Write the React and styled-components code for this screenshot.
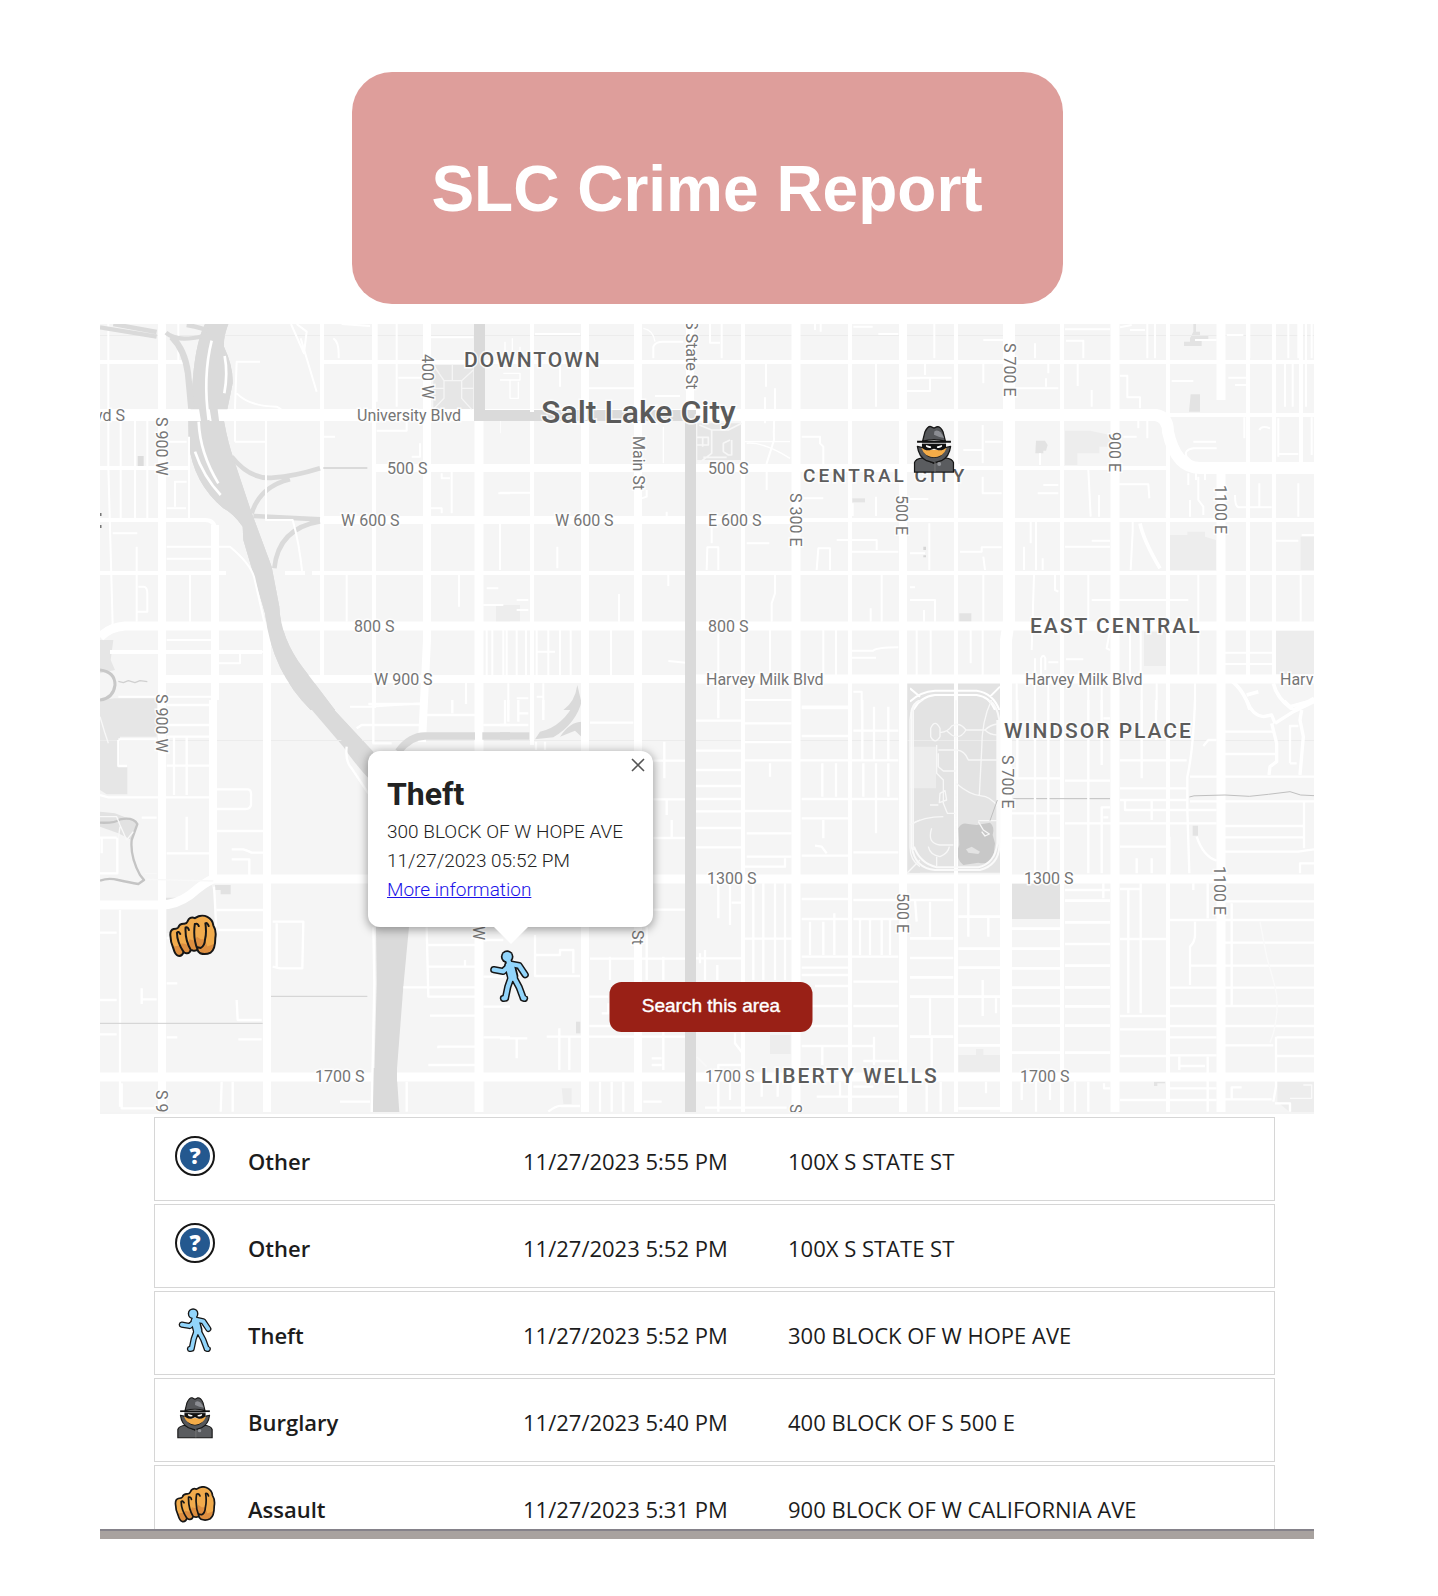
import React from "react";
import styled, { createGlobalStyle } from "styled-components";

const GlobalStyle = createGlobalStyle`
  *, *::before, *::after { box-sizing: border-box; }
  body { margin: 0; background: #fff; font-family: "Open Sans", sans-serif; color: #1c1c1c; }
`;

const Page = styled.main`
  padding: 72px 124px 56px 100px;
`;

const Banner = styled.header`
  display: flex;
  align-items: center;
  justify-content: center;
  max-width: 711px;
  height: 232px;
  margin: 0 auto 20px;
  padding-top: 2px;
  border-radius: 40px;
  background: #de9e9b;
`;

const Title = styled.h1`
  margin: 0;
  font: bold 64px/72px "Liberation Sans", Arial, sans-serif;
  color: #fff;
`;

/* ---------- map ---------- */

const MapFrame = styled.section`
  position: relative;
  height: 790px;
  overflow: hidden;
  background: #f5f5f5;
`;

const MapCanvas = styled.svg`
  display: block;
  width: 100%;
  height: 100%;
`;

const RoadLabel = styled.text`
  font: 400 16px Roboto, sans-serif;
  fill: #757575;
  stroke: #fff;
  stroke-width: 3px;
  stroke-opacity: 0.8;
  paint-order: stroke;
`;

const AreaLabel = styled(RoadLabel)`
  font-size: ${(p) => (p.$small ? 19 : 21)}px;
  font-weight: 500;
  fill: #5c5c5c;
  letter-spacing: ${(p) => (p.$small ? 3 : 2)}px;
`;

const CityLabel = styled(RoadLabel)`
  font-size: 32px;
  font-weight: 500;
  fill: #5a5a5a;
`;

const Pin = styled.span`
  position: absolute;
  left: calc(50% + ${(p) => p.$x}px);
  top: ${(p) => p.$y}px;
  line-height: 0;
  transform: translate(-50%, -50%);
`;

const Popup = styled.article`
  position: absolute;
  left: calc(50% - 339px);
  top: 427px;
  width: 285px;
  padding: 24px 20px 23px 19px;
  border-radius: 12px;
  background: #fff;
  box-shadow: 0 2px 10px 1px rgba(0, 0, 0, 0.35);
  font: 300 19px/29px Roboto, sans-serif;
  color: #222;

  &::after {
    content: "";
    position: absolute;
    top: 100%;
    left: 126px;
    border: 17px solid transparent;
    border-top-color: #fff;
    border-bottom: 0;
  }
`;

const PopupTitle = styled.h2`
  margin: 0 0 4px;
  font-size: 32px;
  line-height: 38px;
  font-weight: 700;
`;

const PopupLine = styled.p`
  margin: 0;
  white-space: nowrap;
`;

const PopupLink = styled.a`
  color: #1a12e8;
`;

const CloseButton = styled.button`
  position: absolute;
  top: 4px;
  right: 5px;
  display: grid;
  place-items: center;
  width: 20px;
  height: 20px;
  padding: 0;
  border: 0;
  background: none;
`;

const SearchButton = styled.button`
  position: absolute;
  left: calc(50% + 4px);
  top: 658px;
  width: 203px;
  height: 50px;
  padding: 0 0 3px;
  transform: translateX(-50%);
  border: 0;
  border-radius: 12px;
  background: #992016;
  color: #fff;
  font: 19px "Liberation Sans", Arial, sans-serif;
  -webkit-text-stroke: 0.4px #fff;
`;

const ROADS = [
  [4, "M322 324V676M374 324V708M743 324V1112M850 324V1112M1062 324V1112M1168 324V1112M956 324V1112M1248 324V675M1274 324V680M1301 324V462M532 324V745"],
  [4, "M100 362H187M322 362H687M695 362H1314M100 468H190M100 520H205Q215 520 215 530M100 573H226M285 573H305M312 573H374M110 652H262M960 468H1168M796 520H1314M374 573H687M695 573H1314M1168 415H1314"],
  [8, "M162 324V1112M215 525V700M213 700V880M267 630V1112M427 324V640L422 742M585 324V1112M638 324V1112M903 324V1112M690 324V415M165 679H687M374 468H687M322 520H687M695 520H796M695 468H960"],
  [9, "M479 415V1112M796 324V1112M1115 324V1112M1221 324V400M1221 470V1112M100 637Q110 627 125 626H687M695 626H1314M695 679H1314M100 905H161Q176 905 190 895Q205 882 213 879H687M695 879H1314M100 1077H377M395 1077H687M695 1077H1314"],
  [12, "M100 415H1156Q1168 417 1168 432Q1176 468 1200 468H1314M1009 324V620L1006 640V1112"],
];

const TILES = [
  {
    x: 90, y: 310, h: 400,
    shapes: [
      ["#e6e6e6", "M1030 165H1150V298H1030ZM30 990H70L62 1050L75 1080L30 1090ZM75 1165H200V1200H30V1170Z"],
      ["#dcdcdc", "M143 438h18v30h-18z"],
      ["#ededed", "M1218 885h42v52h-42z"],
      ["#dadada", "M300 298L310 190Q320 90 345 42H415Q400 80 402 110Q430 170 428 220Q420 260 412 298ZM295 333H402Q414 400 432 450L482 600L545 770L568 890Q572 985 640 1075L735 1200H662Q545 1085 525 910Q490 790 460 690L458 650Q430 610 400 595Q310 520 296 400Z"],
    ],
    lines: [
      ["#fff", 6, "M55 42V470L68 945M92 330V625M135 330V625M172 330V625M297 380V625M300 790V935M140 710V935M230 710H420Q480 760 492 800L525 945M230 746H365M145 830H160Q172 830 172 850V905H140M68 670H142M230 595H288M255 590V515H290M230 395H290M265 155V42M30 155H270M230 990H365M230 1025H520M385 1060H450V1030M85 1160H370"],
      ["#fff", 6, "M603 42L642 130L650 65L620 42M632 85L680 245M435 395V290L440 155H510M440 250Q480 290 560 290Q570 295 575 300M435 395H525M700 155H840M860 42V275M920 42V290M925 203H1000M755 42L840 48M1020 82H1150M730 85Q748 95 746 145M700 380H735M950 330V362H860M965 440H990V400M1085 470V610M1020 595H1055V610M1055 490V505H1080M770 790V935M1107 795V890M1225 550H1260M1180 885H1240M1190 835H1225M1230 640V780M1190 960V1100M1207 960V1108M1240 960V1108M1128 1110V1170M835 1190L1000 1180M780 1190H850"],
      ["#dadada", 13, "M30 52L200 80M70 42L200 66M290 45Q340 52 370 72M228 68Q260 98 340 78"],
      ["#dadada", 19, "M245 80Q285 120 294 190L304 296"],
      ["#dadada", 14, "M425 440Q480 510 550 503Q610 500 690 475M485 610Q510 530 600 508M490 618L690 628M553 775Q565 655 690 634"],
      ["#dadada", 6, "M700 474H832"],
      ["#fff", 8, "M365 92Q338 200 356 330M404 138Q414 190 403 250M326 335Q330 430 385 520M315 425Q340 500 392 555"],
      ["#fff", 6, "M528 320V630H608Q628 700 637 790"],
      ["#f5f5f5", 4, "M1030 165L1062 212H1115L1150 180M1062 212V265L1030 298M1115 212V265L1145 298M1087 165V210M1030 235H1060M1117 235H1150"],
      ["#c8c8c8", 9, "M30 1080Q75 1085 75 1125Q70 1165 30 1170"],
      ["#d0d0d0", 4, "M85 1114L100 1118L115 1112L135 1118L150 1112L172 1115"],
    ],
  },
  {
    x: 500, y: 310, h: 400,
    shapes: [
      ["#e6e6e6", "M592 340H725V450H592Z"],
      ["#e4e4e4", "M1057 565h38v12h-38z"],
      ["#ededed", "M15 885h45v50h-45z"],
      ["#dadada", "M232 1125Q225 1175 190 1200H225Q240 1170 246 1185Z"],
      ["#e3e3e3", "M1222 1118H1260V1200H1222Z"],
    ],
    lines: [
      ["#fff", 6, "M105 72H240M180 155V230M265 235H405M460 145V110Q465 95 490 95H550M630 42V98H660M665 42V145M798 160V230M795 340V262M825 235V300Q820 350 822 390L800 460V540M1128 160V290M1060 50H1118M1135 72H1195M945 42V60M962 42V65M1220 205H1260M1220 243H1260M465 258H540"],
      ["#fff", 6, "M905 380H960V400L970 410V462M910 565H970M1010 690H1130V720M1055 725H1195M1058 580V618M1128 560V618M1145 795V935M1112 895V935M825 795V850L815 880V935M950 780L955 715H990V780M620 780L622 712H655V780M635 650V700M740 700H808M172 710V775M357 852V935M505 795V828M0 548H90M440 540V560L425 565M500 605V618M50 870H85M50 900H85"],
      ["#fff", 6, "M20 960V1095M50 960V1095M78 960V1095M180 960V1095M212 960V1095M333 960V1095M110 1025H165M110 960V1095M145 960V1095M655 970V1095M810 960V1095M970 960V1095M1008 960V1095M1055 1022H1120Q1130 1012 1195 1012M1055 1043H1128M505 1053L558 1058M735 1170H875M1060 1145H1085V1200M905 1195H1050M655 1120V1200M25 1120V1200M50 1165H85M130 1120V1200M110 1160H130"],
      ["#fff", 4, "M0 210H60V190H10M30 210V265H55V215M15 95V130M37 85V130M60 110V150M430 55Q460 60 465 95M735 395H870M740 400Q790 395 870 445M490 350V460M0 330V370M95 330V365"],
      ["#f7f7f7", 5, "M598 345L635 360V430L595 460M635 360H685L725 340M690 390L670 400V425L685 435H695V390M590 382H625V405H590M608 382V410M610 442H680"],
    ],
  },
  {
    x: 910, y: 310, h: 400,
    shapes: [
      ["#ededed", "M465 362H540L600 375V410H568V430H502V465H465ZM780 675H832V665H885V680L918 690V780H780ZM1172 680H1212V780H1172ZM1098 962H1212V1092H1098ZM702 965H775V1068H702Z"],
      ["#e3e3e3", "M850 42H858V65H870V78H895V88H875V108H822V95H840V85L850 65ZM842 253H870V305H837ZM378 392H405L413 405L408 422H400V430H376ZM148 910H184V935H148ZM0 1118H272V1200H0Z"],
      ["#d6d6d6", "M40 710h8v10h-8zM40 736h8v6h-8z"],
    ],
    lines: [
      ["#fff", 6, "M73 42V145M0 203H125M60 205V243H0M45 160V195M220 90H280M375 100V145M465 58H600M468 92H520V145M220 160V220M415 160V190M408 205V230M315 235H445M503 160V228M545 240V290M630 52L665 45M660 60H705M712 42V145M735 42V145M630 197H652V262H690V295M785 213H850M855 90H920M950 75H1000M1018 42V145M955 203H1012V290M975 225H1010M1135 42V145M1165 42V145M1188 42V290M1205 42V145M1125 160V290M1148 160V290"],
      ["#fff", 6, "M218 345V460M225 395H275M218 420H160M390 430V465M218 500V550H275M400 525H445M383 550H445M535 480L542 620M567 555V620M625 523H715L718 565M640 380H680M685 330V355M712 330V385M1003 322V385M1048 360Q1055 345 1080 355M1105 432H1165M1105 440V325M1205 322V435M918 395H850M920 415H850Q820 420 830 440L845 455M975 555Q975 590 985 592H1085M1015 515V590M1048 520V590M1165 520V620M840 570V620M865 500V570L880 590V615M835 490V525M858 490V510M885 490V510M0 567H55M778 400L770 620"],
      ["#fff", 6, "M58 640V780M0 730H45M150 725H215V712H275M220 740L225 780M362 635V700M342 710V780M378 635V780M398 745V780M545 692H600M465 710H600M668 635V665L662 780M1095 692H1165M1175 675H1212M1015 640V935M1172 795V935M0 832H15M0 870H75V935M42 900V935M220 795V935M182 960V1060M218 960V1095M372 795L365 1020M435 795V840L445 845M535 795V935M545 870H770M630 870H835M865 795V935M865 960V1095M660 960V1095M692 960V1095M600 960L590 1015L600 1020M375 1045V1095M393 1095V1045Q400 1030 406 1045V1080M415 1057H445M468 1048H520M945 1028H1090M945 1062H1090M20 960V1095M62 960V1095"],
      ["#fff", 11, "M690 640Q700 690 750 775M945 1100Q1000 1130 1020 1200M1090 1120Q1100 1165 1150 1200L1212 1165M1010 1155L1045 1145"],
      ["#fff", 6, "M320 1120V1200M375 1120V1200M415 1120V1200M535 1120V1200M575 1120V1200M695 1120V1200M740 1120V1200M855 1120V1200M0 1175Q30 1145 75 1142H200Q250 1150 268 1200M10 1200Q30 1160 75 1155H200Q240 1160 255 1200M138 1118V1165M0 1135L30 1160M270 1130L240 1160"],
    ],
  },
  {
    x: 90, y: 700, h: 420,
    shapes: [
      ["#e6e6e6", "M30 0H200V195H112V283H50L30 270ZM200 195V110H90V195Z"],
      ["#ededed", "M230 595L262 600L365 555L378 600V690L230 700Z"],
      ["#e2e2e2", "M375 555H422V583H392V570H375ZM225 593H265V605H225ZM30 335L75 340L140 365L125 420L85 400L30 380Z"],
      ["#dadada", "M640 0H705L850 155V250Q800 200 760 140ZM858 680H957L940 860L920 1120L928 1237H850L853 1120L860 850Z"],
    ],
    lines: [
      ["#fff", 7, "M85 120V198H112M85 118H200M230 15H370M230 75H370M230 110H370M230 197H360M252 110V285M290 110V285M30 285L55 292H360M375 268H475Q485 270 483 290V315Q480 328 465 327H375M375 393H520M230 460H360M290 350V450M155 353H200M425 448H460Q480 455 485 458H520M425 478H478V525M372 560Q375 600 378 680M380 630H520M385 690H520M230 714H375M30 698H80M90 630V1220M30 900H80M30 1003H80M155 865V912M155 898H200M230 850H262M440 900L443 960H515M445 1018H515M230 1012H262M95 1150V1225H200M395 1145L392 1235M428 1145V1235M750 1205H840M950 1145V1235M30 413H80M82 413V520H30M35 415V460"],
      ["#fff", 7, "M548 665H640L637 805H570L548 800M560 670V800M850 682L853 850L845 1237M770 140Q765 185 785 205L835 280M800 85L815 75H1000M1000 45H1155M850 0V130H905M835 12H995M1087 0V40M1010 682L1015 890H1155M1015 735H1155M1015 800H1155M940 862H1155M1125 780V800M1180 720H1240M1180 830H1240M1180 920H1260M1020 947H1155M1180 1012H1260M1045 1045V1040H1155M1015 1095H1155M1180 75H1260M1245 0V75M1128 0V12"],
      ["#c4c4c4", 7, "M30 368Q75 370 90 358Q130 350 142 372L125 420Q120 470 150 525L162 540L145 552Q120 548 85 540Q55 532 30 542"],
      ["#f8f8f8", 4, "M30 350H80L90 375L110 420L130 395M90 380L85 415M30 50L45 100L55 130M165 520H200M170 538L370 543"],
      ["#cfcfcf", 3, "M543 889H832M30 970H518"],
      ["#dadada", 22, "M925 155Q960 108 1005 108H1155M1177 108H1260"],
    ],
  },
  {
    x: 500, y: 700, h: 420,
    shapes: [
      ["#dadada", "M228 0Q190 80 120 95L105 118L160 112Q230 70 246 0ZM180 110Q210 65 246 65V112L225 92Z"],
      ["#ededed", "M810 1005H872V1062H810ZM185 1165H215V1212H190Z"],
      ["#e2e2e2", "M228 965h13v35h-13z"],
      ["#e3e3e3", "M1222 0H1260V518H1222Z"],
    ],
    lines: [
      ["#dadada", 22, "M0 108H88"],
      ["#fff", 7, "M585 62H728M585 152H728M585 210H728M585 258H728M585 297H728M585 334H728M585 384H728M585 442H728M460 182H558M460 298H558M460 414H558M460 629H558M270 776H558M585 775H728M140 1010H558M270 68H400M493 125V235M500 300V345M515 360V410M735 70H875M735 126H875M735 181H1195M905 20H1045M905 108H1045M735 333H875M740 400H875M740 470H875M905 355H1045M905 297H1195M905 467H1045M1060 457H1195M735 500H855V475"],
      ["#fff", 7, "M1060 92H1195M1087 0V180M1122 20V180M1165 20V180M967 190V290M1008 190V290M1090 190V290M1128 190V400M1165 190V290M810 190V230M970 360V415M945 437L965 440L980 460M655 0V55"],
      ["#fff", 7, "M655 550V655M690 550V675M695 608H725M760 550V840M790 550V840M825 550V840M855 550V840M735 716H875M905 597H1045M905 657H1045M905 770H1195M1060 600H1195M1060 657H1195M930 665V765M970 665V765M1003 640V765M1080 660V765M1110 660V765M1145 660V765M1170 660V765M905 803H1045M905 825H1045M945 858H1045M905 918H1045M905 978H1045M1060 845H1195M1060 918H1195M1060 978H1195M905 1038H1120M967 1040V1095M1122 1010V1095M1090 1083H1195M950 1190H1195M1020 1145V1190M1060 1160H1120"],
      ["#fff", 7, "M105 705V828H240M105 765H180V750H220V820M330 770V840M440 680V840M490 770V840M600 760V790M615 750V840M652 795V840M268 890H325M268 978H330M325 910V940H305M490 995V1110M370 1145V1235M335 1145V1235M300 1145V1235M178 985V1110M208 1010V1110M0 1015H82M50 1015V1075M455 1075H485M455 1095H485M430 1205H485M145 1235Q170 1215 185 1218H240M705 1000V1030L728 1060V1095H655V1235M615 1223H860M690 1145V1200M785 1145V1190M833 1145V1190M25 0V65M55 0V65M55 40H85M130 0V60M108 125V150M135 125V150M0 75H85"],
      ["#f8f8f8", 4, "M1260 0Q1232 15 1230 60V440Q1230 480 1260 500M1240 20V450M1228 375L1260 360M1222 518L1260 480M590 1070L620 1100"],
    ],
  },
  {
    x: 910, y: 700, h: 420,
    shapes: [
      ["#e3e3e3", "M0 0H272V518H0Z"],
      ["#ececec", "M0 140H78V265H0Z"],
      ["#e3e3e3", "M306 550H450V657H306ZM848 377h16v30h-16zM732 1145H765V1150H742V1158H732Z"],
      ["#ededed", "M145 1065H198V1047H220V1065H270V1115H145ZM1102 1145H1212V1237H1140L1102 1205Z"],
      ["#c8c8c8", "M145 385Q155 365 175 372L200 375L240 368Q255 380 248 405L255 430L250 475Q235 495 205 488L160 495Q140 480 142 450L148 435Z"],
      ["#e3e3e3", "M168 448L185 440L210 455L205 462L175 458Z"],
    ],
    lines: [
      ["#fafafa", 6, "M5 30Q15 0 40 0M5 30V440Q15 505 75 510H210Q265 495 268 440V60Q260 10 235 0M262 60V430Q255 490 205 502H80Q30 490 12 440"],
      ["#f7f7f7", 4, "M138 0V500M62 85Q75 55 90 85V110Q75 135 62 110ZM90 98Q115 95 125 78Q150 65 168 90Q150 120 125 105L110 92M168 90H225Q240 75 262 72M225 90Q240 105 262 105M245 0Q215 60 215 150L208 285M85 150H140Q165 152 175 180H262M85 160V200L100 213H138M80 135V220L100 240V310L112 340H135M138 250Q180 285 210 287Q245 290 262 320M90 280L105 272L110 300L88 308ZM60 315H85M0 375Q40 350 100 350M65 385Q50 430 90 435H130M55 440Q60 465 90 470Q115 460 118 440M80 470V500M205 362H262M205 365L220 390L238 402L225 408L215 395"],
      ["#bfbfbf", 3, "M262 300L240 362M310 296H600M838 291Q850 286 870 287L945 285L1018 289L1075 283L1140 275L1172 285L1212 287"],
      ["#fff", 7, "M375 0V520M415 0V520M322 0V235M306 235H450M465 242H600M306 340H450M306 414H450M535 0V520M575 0V195M465 370H920M630 181H830M630 265H830M695 0V235M738 0V120M772 120V235M580 55H600M855 0Q850 150 832 230V330L838 520M630 440H770M680 475V520M725 475V520M778 410V520M575 520V322H600M580 352H595M645 300V330H920M725 300V360M630 300H830M860 410Q880 470 920 482M945 95H1090M945 162H1095M880 138L895 120H920M840 230H1212M840 304H1212M945 378H1180M945 412H1180M945 455H1165Q1190 450 1212 448M1182 305V445M1170 520V490H1212M1140 190H1160M1165 78H1140V190"],
      ["#fff", 10, "M1010 0Q1025 45 1060 50L1085 45L1095 70M1120 0L1140 20L1212 0M1095 70L1150 35L1212 5M1085 70L1100 130V185L1080 200L1077 225M1175 30L1170 60L1180 110L1170 225"],
      ["#fff", 8, "M145 650H270M145 746H270M145 803H270M0 600H130M0 715H130M0 774H130M0 832H130M0 890H270M145 978H270M0 1010H130M145 1036H270M145 1225H270M306 686H450M306 746H450M306 805H450M306 863H450M306 918H450M306 977H450M306 1058H450M465 602H600M465 667H600M465 732H600M465 797H600M465 862H600M465 919H600M465 977H600M465 1058H600"],
      ["#fff", 7, "M175 550V710M235 650V710M60 605V710M15 600L20 665M60 895V1005M65 1010V1110M218 840V948M258 895V940M50 1145V1235M92 1145V1235M228 1145V1180M335 1145V1200M378 1145V1235M420 1145V1200M455 1145V1235M495 1145V1235M535 1145V1235M465 570H600M580 550V595M600 1165H582V1150M630 567H690M655 570V940M692 550V940M630 717H768M630 948H768M630 988H768M630 1068H768M630 1200H768M780 660H1212M780 863H1212M780 918H1212M780 978H1212M780 1012H920M780 1066H920M780 1165H920M780 1200H920M850 550V570M893 550V655M855 665V705Q855 725 840 740V855M840 797H1212M945 604H1212M945 728H1212M965 610V915M945 1036H1090M1100 1012H1212M1095 1068H1212M1098 1010V1160L1090 1205M808 1070V1110M810 1098H885M893 1070V1235M945 1198H1085M965 1200V1162H995M1095 1210H1140V1235"],
      ["#fafafa", 4, "M1050 665L1070 770L1095 860Q1110 920 1090 1000L1080 1028M1180 1155H1205V1195H1140"],
    ],
  },
];

const ROAD_LABELS = [
  ["yd S", 95, 421],
  ["University Blvd", 357, 421], ["500 S", 387, 474], ["W 600 S", 341, 526], ["800 S", 354, 632], ["W 900 S", 374, 685],
  ["W 600 S", 555, 526], ["500 S", 708, 474], ["E 600 S", 708, 526], ["800 S", 708, 632], ["Harvey Milk Blvd", 706, 685],
  ["Harvey Milk Blvd", 1025, 685], ["Harv", 1280, 685], ["1300 S", 707, 884], ["1300 S", 1024, 884],
  ["1700 S", 315, 1082], ["1700 S", 705, 1082], ["1700 S", 1020, 1082],
];

const VERTICAL_LABELS = [
  ["S 900 W", 156, 417], ["400 W", 422, 354], ["S State St", 686, 320], ["Main St", 633, 436], ["S 300 E", 790, 493],
  ["500 E", 896, 495], ["S 700 E", 1004, 343], ["900 E", 1109, 432], ["1100 E", 1215, 485], ["S 900 W", 156, 694],
  ["S 700 E", 1002, 755], ["500 E", 897, 893], ["1100 E", 1214, 866], ["W", 473, 926], ["St", 632, 930],
  ["S 9", 156, 1090], ["S", 790, 1104],
];

function CityMap() {
  return (
    <MapCanvas viewBox="100 324 1214 790" preserveAspectRatio="xMidYMid slice" role="img" aria-label="Map of Salt Lake City">
      <rect x="-900" y="324" width="3200" height="790" fill="#f5f5f5" />
      {TILES.map((t) => (
        <svg key={`${t.x}-${t.y}`} x={t.x} y={t.y} width="420" height={t.h} viewBox={`0 0 1260 ${t.h * 3}`}>
          {t.shapes.map(([fill, d]) => <path key={d} d={d} fill={fill} />)}
        </svg>
      ))}
      <path d="M100 335.500H1314M100 740.500H1314" stroke="#ececec" />
      {ROADS.map(([w, d]) => <path key={d} d={d} fill="none" stroke="#fff" strokeWidth={w} />)}
      <svg x="90" y="310" width="420" height="400" viewBox="0 0 1260 1200">
        <path fill="#dadada" d="M302 298L310 190Q320 90 345 42H415Q400 80 402 110Q430 170 428 220Q420 260 412 298ZM326 290H352L360 340H334ZM358 290H382L388 340H366ZM295 333H402Q414 400 432 450L482 600L545 770L568 890Q572 985 640 1075L735 1200H662Q545 1085 525 910Q490 790 460 690L458 650Q430 610 400 595Q310 520 296 400Z" />
      </svg>
      <path fill="#dadada" d="M373 1068L397 1068V1112H373ZM305 700H325L373 752V775Q345 745 305 700Z" />
      {TILES.map((t) => (
        <svg key={`${t.x}-${t.y}`} x={t.x} y={t.y} width="420" height={t.h} viewBox={`0 0 1260 ${t.h * 3}`}>
          {t.lines.map(([stroke, w, d]) => (
            <path key={d} d={d} fill="none" stroke={stroke} strokeWidth={w} strokeLinejoin="round" />
          ))}
        </svg>
      ))}
      <path fill="none" stroke="#dadada" strokeWidth="11" d="M479.500 324V415.500H690.500V1112" />
      <path fill="none" stroke="#fff" strokeWidth="4" d="M532 405V412M585 410V420M638 410V420" />
      <path d="M100 513V516M100 525V528" stroke="#777" strokeWidth="3" />
      {ROAD_LABELS.map(([text, x, y]) => <RoadLabel key={`${x}-${y}`} x={x} y={y}>{text}</RoadLabel>)}
      {VERTICAL_LABELS.map(([text, x, y]) => (
        <RoadLabel key={`${x}-${y}`} transform={`translate(${x} ${y}) rotate(90)`}>{text}</RoadLabel>
      ))}
      <AreaLabel x="464" y="367">DOWNTOWN</AreaLabel>
      <CityLabel x="541" y="423">Salt Lake City</CityLabel>
      <AreaLabel x="803" y="482" $small>CENTRAL CITY</AreaLabel>
      <AreaLabel x="1030" y="633">EAST CENTRAL</AreaLabel>
      <AreaLabel x="1004" y="738">WINDSOR PLACE</AreaLabel>
      <AreaLabel x="761" y="1083">LIBERTY WELLS</AreaLabel>
      <rect x="-900" y="1112" width="3200" height="2" fill="#f4f4f4" />
    </MapCanvas>
  );
}

/* ---------- crime icons ---------- */

const BurglarIcon = ({ h }) => (
  <svg height={h} width={Math.round(h * 0.84)} viewBox="40 28 126 148" aria-hidden="true">
    <path d="M43 173V144Q46 132 68 129L102 146L138 129Q160 132 163 144V173Z" fill="#5a5c5f" stroke="#161616" strokeWidth="4" />
    <path d="M52 94L68 98Q78 128 103 128Q128 128 138 98L154 94Q150 126 126 138L103 145L80 138Q56 126 52 94Z" fill="#55575a" stroke="#161616" strokeWidth="4" strokeLinejoin="round" />
    <path d="M64 98Q74 127 103 127Q132 127 142 98Q128 108 103 104Q78 108 64 98Z" fill="#f4ac48" />
    <path d="M66 82H140V94Q136 107 116 106L103 101L90 106Q70 107 66 94Z" fill="#111" />
    <path d="M78 90L94 94V98Q84 100 79 95ZM128 90L112 94V98Q122 100 127 95Z" fill="#fff" />
    <path d="M68 78L75 50Q84 31 93 33L103 38L113 33Q124 33 131 50L138 78Q103 68 68 78Z" fill="#55575a" stroke="#161616" strokeWidth="4" strokeLinejoin="round" />
    <path d="M104 48Q120 38 134 68Q118 66 103 58Z" fill="#8b8d92" />
    <path d="M51 80H155" stroke="#111" strokeWidth="6" />
    <path d="M58 85L148 85" stroke="#fff" strokeWidth="2" />
    <path d="M106 142V172" stroke="#777" strokeWidth="3" />
    <circle cx="119" cy="148" r="6" fill="#94969b" />
  </svg>
);

const FistIcon = ({ w }) => (
  <svg width={w} height={Math.round(w * 0.88)} viewBox="26 29 145 130" aria-hidden="true">
    <path d="M30 92Q29 76 40 73Q52 72 54 68Q58 56 72 57Q80 56 82 50Q88 34 104 40Q124 26 142 36Q158 44 160 62Q170 78 166 100Q166 134 152 144Q136 152 120 146Q112 140 112 134Q108 140 98 138L92 136Q88 148 78 146Q74 146 70 142Q66 156 54 154Q44 150 40 134Q30 112 30 92Z" fill="#f1ab4c" />
    <path d="M40 126L62 122L64 116L82 120L88 104L104 108L110 96L122 104L134 104L142 126L162 118Q160 136 152 144Q136 152 120 146L112 134L98 138L92 136Q86 148 70 142Q66 156 54 154Q44 150 40 126Z" fill="#dd8e40" />
    <path d="M30 92Q29 76 40 73Q52 72 54 68Q58 56 72 57Q80 56 82 50Q88 34 104 40Q124 26 142 36Q158 44 160 62Q170 78 166 100Q166 134 152 144Q136 152 120 146Q112 140 112 134Q108 140 98 138L92 136Q88 148 78 146Q74 146 70 142Q66 156 54 154Q44 150 40 134Q30 112 30 92ZM50 84Q50 112 70 142M50 84Q54 78 60 88M76 68Q74 106 92 136M76 68Q84 66 86 76M104 58Q98 100 112 134M104 58Q112 54 116 64M136 56Q140 84 135 104Q134 124 122 130L112 128M136 56Q142 52 146 64" fill="none" stroke="#161616" strokeWidth="6" strokeLinejoin="round" strokeLinecap="round" />
  </svg>
);

const WALK_LIMBS = "M92 76L72 94L44 89M96 72L120 77L138 104M96 112L86 140L79 174M103 110L120 142L132 174M79 174L73 175M132 174L136 175";
const WalkerIcon = ({ h }) => (
  <svg height={h} width={Math.round(h * 0.79)} viewBox="32 30 121 156" aria-hidden="true">
    <g fill="none" strokeLinecap="round" strokeLinejoin="round">
      <path d={WALK_LIMBS} stroke="#161616" strokeWidth="22" />
      <path d="M92 78L100 108" stroke="#161616" strokeWidth="35" />
      <circle cx="84" cy="50" r="19" fill="#161616" />
      <path d={WALK_LIMBS} stroke="#92d5fb" strokeWidth="13" />
      <path d="M92 78L100 110" stroke="#92d5fb" strokeWidth="25" />
      <circle cx="84" cy="50" r="14" fill="#92d5fb" />
      <path d="M84 50L92 76" stroke="#92d5fb" strokeWidth="13" />
    </g>
  </svg>
);

const QuestionMark = styled.text`
  font: 800 22px "Open Sans", sans-serif;
  fill: #fff;
  text-anchor: middle;
`;

const OtherIcon = () => (
  <svg width="40" height="40" viewBox="0 0 40 40" aria-hidden="true">
    <circle cx="20" cy="20" r="19" fill="#fff" stroke="#161616" strokeWidth="2" />
    <circle cx="20" cy="20" r="15" fill="#24588f" />
    <QuestionMark x="20" y="28">?</QuestionMark>
  </svg>
);

/* ---------- report list ---------- */

const ListFrame = styled.section`
  height: 415px;
  padding: 0 39px 0 54px;
  overflow: hidden;
`;

const ReportTable = styled.table`
  width: 100%;
  table-layout: fixed;
  border-collapse: separate;
  border-spacing: 0 3px;
  font-size: 22px;
  line-height: 32px;
`;

const Cell = styled.td`
  width: ${(p) => p.$width || "auto"};
  height: 84px;
  padding: 3px 0 0;
  border: solid #d6d6d6;
  border-width: 1px 0;
  white-space: nowrap;

  &:last-child { border-right-width: 1px; }
`;

const IconCell = styled(Cell)`
  border-left-width: 1px;
  padding: 0 0 6px;
  line-height: 0;
  text-align: center;
`;

const NameCell = styled(Cell)`
  padding-left: 13px;
  text-align: left;
  font-weight: 600;
`;

const Footer = styled.footer`
  height: 10px;
  border-top: 2px solid #85828a;
  background: #a8a29f;
`;

const REPORTS = [
  { icon: <OtherIcon />, type: "Other", time: "11/27/2023 5:55 PM", place: "100X S STATE ST" },
  { icon: <OtherIcon />, type: "Other", time: "11/27/2023 5:52 PM", place: "100X S STATE ST" },
  { icon: <WalkerIcon h={44} />, type: "Theft", time: "11/27/2023 5:52 PM", place: "300 BLOCK OF W HOPE AVE" },
  { icon: <BurglarIcon h={43} />, type: "Burglary", time: "11/27/2023 5:40 PM", place: "400 BLOCK OF S 500 E" },
  { icon: <FistIcon w={42} />, type: "Assault", time: "11/27/2023 5:31 PM", place: "900 BLOCK OF W CALIFORNIA AVE" },
];

export default function App() {
  return (
    <Page>
      <GlobalStyle />
      <Banner>
        <Title>SLC Crime Report</Title>
      </Banner>
      <MapFrame>
        <CityMap />
        <Pin $x={227} $y={125}><BurglarIcon h={49} /></Pin>
        <Pin $x={-514} $y={612}><FistIcon w={49} /></Pin>
        <Pin $x={-197} $y={652}><WalkerIcon h={52} /></Pin>
        <Popup>
          <CloseButton type="button" aria-label="Close">
            <svg width="14" height="14" viewBox="0 0 14 14" aria-hidden="true">
              <path d="M1 1L13 13M13 1L1 13" stroke="#555" strokeWidth="1.6" />
            </svg>
          </CloseButton>
          <PopupTitle>Theft</PopupTitle>
          <PopupLine>300 BLOCK OF W HOPE AVE</PopupLine>
          <PopupLine>11/27/2023 05:52 PM</PopupLine>
          <PopupLine><PopupLink href="#more">More information</PopupLink></PopupLine>
        </Popup>
        <SearchButton type="button">Search this area</SearchButton>
      </MapFrame>
      <ListFrame>
        <ReportTable>
          <tbody>
            {REPORTS.map((r, i) => (
              <tr key={i}>
                <IconCell $width="81px">{r.icon}</IconCell>
                <NameCell as="th" scope="row" $width="288px">{r.type}</NameCell>
                <Cell $width="265px">{r.time}</Cell>
                <Cell>{r.place}</Cell>
              </tr>
            ))}
          </tbody>
        </ReportTable>
      </ListFrame>
      <Footer />
    </Page>
  );
}
